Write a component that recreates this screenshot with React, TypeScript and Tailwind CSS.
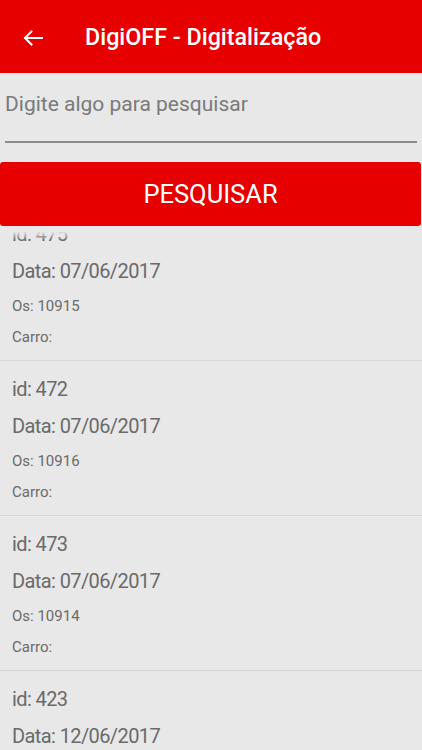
import React from "react";

const items = [
  { id: "475", data: "07/06/2017", os: "10915" },
  { id: "472", data: "07/06/2017", os: "10916" },
  { id: "473", data: "07/06/2017", os: "10914" },
  { id: "423", data: "12/06/2017", os: "10917" },
];

export default function App() {
  return (
    <div className="w-[422px] h-[750px] overflow-hidden bg-[#e8e8e8] flex flex-col" style={{ fontFamily: "Roboto, 'Noto Sans', sans-serif" }}>
      <div className="h-[73px] bg-[#e60000] flex items-center shrink-0">
        <svg className="ml-[23px] mt-[2px]" width="20" height="16" viewBox="0 0 20 16" fill="none" stroke="#fff" strokeWidth="2" strokeLinecap="square">
          <path d="M19 8H2" />
          <path d="M8.5 1.5L2 8L8.5 14.5" />
        </svg>
        <span className="ml-[42px] text-white text-[23.3px] font-medium leading-none mt-[3px]">DigiOFF - Digitalização</span>
      </div>
      <div className="px-[5px] pt-[18px] shrink-0">
        <div className="text-[21px] leading-[26px] text-[#7a7a7a]">Digite algo para pesquisar</div>
        <div className="mt-[24px] h-[1.5px] bg-[#8a8a8a]" />
      </div>
      <div className="mt-[19px] h-[64px] mr-[1px] rounded-[3px] bg-[#e60000] flex items-center justify-center shrink-0 relative z-10">
        <span className="text-white text-[25.5px] leading-none mt-[2px]">PESQUISAR</span>
      </div>
      <div className="flex-1 overflow-hidden relative">
        <div className="absolute top-0 left-0 right-0 h-[14px] bg-linear-to-b from-[#e8e8e8] from-40% to-[#e8e8e800] z-10" />
        <div className="mt-[-20px]">
          {items.map((it) => (
            <div key={it.id} className="h-[155px] border-b border-[#d6d6d6] pl-[12px] pt-[17px] text-[#6a6a6a]">
              <div className="text-[20px] leading-[22px] tracking-[-0.6px]">id: {it.id}</div>
              <div className="text-[20px] leading-[22px] tracking-[-0.6px] mt-[15px]">Data: {it.data}</div>
              <div className="text-[15px] leading-[18px] mt-[15px]">Os: {it.os}</div>
              <div className="text-[15px] leading-[18px] mt-[13px]">Carro:</div>
            </div>
          ))}
        </div>
      </div>
    </div>
  );
}
